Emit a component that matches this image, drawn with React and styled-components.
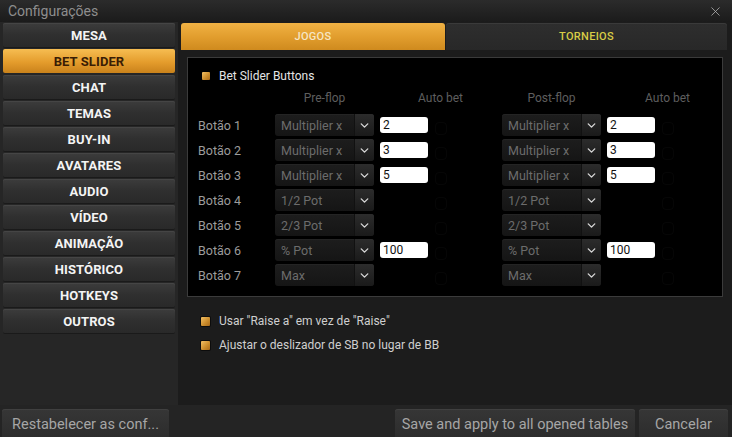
import React from "react";
import styled, { createGlobalStyle } from "styled-components";
import { ChevronDown, X } from "lucide-react";

const Global = createGlobalStyle`
  html, body { margin: 0; padding: 0; background: #1c1c1c; }
  body { font-family: Roboto, "Liberation Sans", sans-serif; }
  * { box-sizing: border-box; }
`;

const Window = styled.div`
  width: 732px;
  height: 437px;
  display: flex;
  flex-direction: column;
  overflow: hidden;
  background: #1c1c1c;
`;

const TitleBar = styled.div`
  height: 22px;
  flex: none;
  display: flex;
  align-items: center;
  justify-content: space-between;
  padding: 0 9px 0 8px;
  background: linear-gradient(#2b2b2b, #1b1b1b);
  color: #8e8e8e;
  font-size: 14px;
`;

const CloseButton = styled.div`
  display: flex;
  color: #b8b8b8;
`;

const Body = styled.div`
  flex: 1;
  display: flex;
  min-height: 0;
`;

const Sidebar = styled.div`
  width: 178px;
  flex: none;
  background: #262626;
  padding: 1px 3px 0 3px;
  display: flex;
  flex-direction: column;
  gap: 2px;
`;

const NavButton = styled.div`
  height: 24px;
  width: 172px;
  border-radius: 2px;
  display: flex;
  align-items: center;
  justify-content: center;
  font-size: 13px;
  font-weight: 700;
  letter-spacing: 0.1px;
  color: ${(p) => (p.$active ? "#3a1d05" : "#f4f4f4")};
  background: ${(p) =>
    p.$active
      ? "linear-gradient(#f6bd52, #e49c2c 55%, #c9821b)"
      : "linear-gradient(#3c3c3c, #2f2f2f 50%, #292929)"};
  box-shadow: ${(p) =>
    p.$active ? "none" : "inset 0 1px 0 #454545, 0 1px 0 #1a1a1a"};
`;

const Main = styled.div`
  flex: 1;
  display: flex;
  flex-direction: column;
  padding: 1px 5px 0 3px;
  background: #1c1c1c;
`;

const Tabs = styled.div`
  display: flex;
  height: 27px;
  gap: 1px;
`;

const Tab = styled.div`
  flex: ${(p) => p.$grow};
  display: flex;
  align-items: center;
  justify-content: center;
  border-radius: 3px 3px 0 0;
  font-size: 11px;
  font-weight: 500;
  letter-spacing: 0.3px;
  color: ${(p) => (p.$active ? "#f6e6c4" : "#d8cc46")};
  background: ${(p) =>
    p.$active
      ? "linear-gradient(#f0b244, #e29e2e 50%, #cf8a1e)"
      : "linear-gradient(#2e2e2e, #282828)"};
  box-shadow: ${(p) => (p.$active ? "none" : "inset 0 1px 0 #3a3a3a")};
`;

const Panel = styled.div`
  margin: 7px 4px 0 6px;
  background: #000;
  border: 1px solid #3b3b3b;
  padding: 10px 0 10px 10px;
`;

const CheckRow = styled.div`
  display: flex;
  align-items: center;
  gap: ${(p) => p.$gap}px;
  padding-left: ${(p) => p.$indent}px;
  height: ${(p) => p.$h}px;
  font-size: 12px;
  color: ${(p) => p.$color};
`;

const OrangeBox = styled.span`
  width: ${(p) => p.$size}px;
  height: ${(p) => p.$size}px;
  border-radius: 1px;
  background: linear-gradient(135deg, #f3c064, #c98a2a 60%, #a86a1a);
  box-shadow: 0 0 0 ${(p) => p.$ring}px #0c0c0c;
  flex: none;
`;

const Grid = styled.div`
  display: grid;
  grid-template-columns: 77px 99px 6px 122px 99px 6px 115px;
  grid-auto-rows: 22px;
  row-gap: 3px;
  margin-top: 5px;
  align-items: center;
`;

const Header = styled.div`
  grid-column: ${(p) => p.$col};
  height: 20px;
  margin-bottom: 5px;
  display: flex;
  align-items: center;
  justify-content: ${(p) => (p.$left ? "flex-start" : "center")};
  padding-left: ${(p) => (p.$left ? 38 : 0)}px;
  font-size: 12px;
  color: #5e5e5e;
  white-space: nowrap;
`;

const Label = styled.div`
  grid-column: 1;
  font-size: 12.5px;
  color: #9c9c9c;
`;

const Select = styled.div`
  grid-column: ${(p) => p.$col};
  height: 22px;
  display: flex;
  border-radius: 3px;
  overflow: hidden;
  background: linear-gradient(#1d1d1d, #151515);
  box-shadow: inset 0 1px 0 #242424;
`;

const SelectText = styled.div`
  flex: 1;
  display: flex;
  align-items: center;
  padding-left: 6px;
  font-size: 12.5px;
  color: #6c6c6c;
  white-space: nowrap;
`;

const SelectArrow = styled.div`
  width: 20px;
  display: flex;
  align-items: center;
  justify-content: center;
  color: #d6d6d6;
  background: linear-gradient(#2c2c2c, #1a1a1a);
  box-shadow: inset 1px 0 0 #111;
`;

const AutoCell = styled.div`
  grid-column: ${(p) => p.$col};
  display: flex;
  align-items: center;
  gap: 7px;
`;

const ValueInput = styled.div`
  width: 48px;
  height: 16px;
  border-radius: 3px;
  background: #fff;
  color: #111;
  font-size: 12px;
  display: flex;
  align-items: center;
  padding-left: 3px;
  visibility: ${(p) => (p.$hidden ? "hidden" : "visible")};
`;

const GhostCheck = styled.span`
  width: 12px;
  height: 13px;
  border-radius: 4px;
  border: 1px solid rgba(255, 255, 255, 0.025);
  margin-top: 7px;
`;

const Options = styled.div`
  display: flex;
  flex-direction: column;
  gap: 10px;
  padding: 17px 0 0 20px;
`;

const Footer = styled.div`
  height: 32px;
  flex: none;
  display: flex;
  gap: 4px;
  padding: 4px 4px 0 2px;
  background: #242424;
`;

const FooterButton = styled.div`
  width: ${(p) => p.$w}px;
  margin-left: ${(p) => p.$ml || 0}px;
  height: 30px;
  border-radius: 3px 3px 0 0;
  display: flex;
  align-items: center;
  justify-content: center;
  font-size: 14.5px;
  color: #a6a6a6;
  background: linear-gradient(#363636, #2c2c2c);
  box-shadow: inset 0 1px 0 #404040;
  white-space: nowrap;
`;

const navItems = [
  "MESA", "BET SLIDER", "CHAT", "TEMAS", "BUY-IN", "AVATARES", "AUDIO",
  "VÍDEO", "ANIMAÇÃO", "HISTÓRICO", "HOTKEYS", "OUTROS",
];

const buttons = [
  { type: "Multiplier x", value: "2" },
  { type: "Multiplier x", value: "3" },
  { type: "Multiplier x", value: "5" },
  { type: "1/2 Pot" },
  { type: "2/3 Pot" },
  { type: "% Pot", value: "100" },
  { type: "Max" },
];

function SliderSelect({ col, text }) {
  return (
    <Select $col={col}>
      <SelectText>{text}</SelectText>
      <SelectArrow>
        <ChevronDown size={13} strokeWidth={2.6} />
      </SelectArrow>
    </Select>
  );
}

function Auto({ col, value }) {
  return (
    <AutoCell $col={col}>
      <ValueInput $hidden={!value}>{value}</ValueInput>
      <GhostCheck />
    </AutoCell>
  );
}

export default function App() {
  return (
    <Window>
      <Global />
      <TitleBar>
        Configurações
        <CloseButton>
          <X size={15} strokeWidth={1.2} />
        </CloseButton>
      </TitleBar>
      <Body>
        <Sidebar>
          {navItems.map((item) => (
            <NavButton key={item} $active={item === "BET SLIDER"}>
              {item}
            </NavButton>
          ))}
        </Sidebar>
        <Main>
          <Tabs>
            <Tab $active $grow="264">JOGOS</Tab>
            <Tab $grow="281">TORNEIOS</Tab>
          </Tabs>
          <Panel>
            <CheckRow $gap={9} $indent={4} $h={16} $color="#e4e4e4">
              <OrangeBox $size={8} $ring={0} />
              Bet Slider Buttons
            </CheckRow>
            <Grid>
              <Header $col="2">Pre-flop</Header>
              <Header $col="4" $left>Auto bet</Header>
              <Header $col="5">Post-flop</Header>
              <Header $col="7" $left>Auto bet</Header>
              {buttons.map((b, i) => (
                <React.Fragment key={i}>
                  <Label>Botão {i + 1}</Label>
                  <SliderSelect col="2" text={b.type} />
                  <Auto col="4" value={b.value} />
                  <SliderSelect col="5" text={b.type} />
                  <Auto col="7" value={b.value} />
                </React.Fragment>
              ))}
            </Grid>
          </Panel>
          <Options>
            <CheckRow $gap={9} $indent={0} $h={14} $color="#cfcfcf">
              <OrangeBox $size={9} $ring={1} />
              Usar "Raise a" em vez de "Raise"
            </CheckRow>
            <CheckRow $gap={9} $indent={0} $h={14} $color="#cfcfcf">
              <OrangeBox $size={9} $ring={1} />
              Ajustar o deslizador de SB no lugar de BB
            </CheckRow>
          </Options>
        </Main>
      </Body>
      <Footer>
        <FooterButton $w={167}>Restabelecer as conf...</FooterButton>
        <FooterButton $w={240} $ml={222}>
          Save and apply to all opened tables
        </FooterButton>
        <FooterButton $w={89}>Cancelar</FooterButton>
      </Footer>
    </Window>
  );
}
